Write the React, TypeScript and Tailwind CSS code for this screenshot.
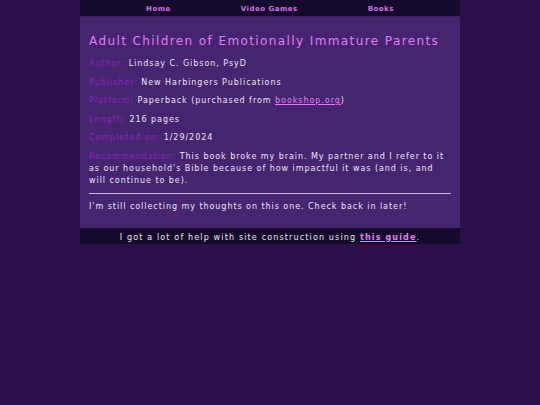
import React from "react";

const font = { fontFamily: '"DejaVu Sans", "Liberation Sans", sans-serif' };

function Row({ label, children }: { label: string; children: React.ReactNode }) {
  return (
    <p className="mb-[6.5px] leading-[12px]">
      <span className="text-[#8e22b8]">{label}</span> <span className="text-[#ece4f4]">{children}</span>
    </p>
  );
}

export default function App() {
  return (
    <div className="min-h-[405px] w-full bg-[#2b0f49]" style={font}>
      <div className="mx-auto w-[380px]">
        <nav className="h-[17px] pt-[3px] bg-[#150a2c] flex justify-center items-center gap-[70px] text-[7px] tracking-[0.5px] font-bold text-[#d26fe6] border-b border-[#3a1d62]">
          <span>Home</span>
          <span>Video Games</span>
          <span>Books</span>
        </nav>
        <main className="bg-[#45256f] px-[9px] pt-[16px] pb-[15px]">
          <h1 className="text-[12px] tracking-[1.4px] text-[#e577f5] leading-[16px] mb-[9px]">
            Adult Children of Emotionally Immature Parents
          </h1>
          <div className="text-[8px] tracking-[0.95px]">
            <Row label="Author:">Lindsay C. Gibson, PsyD</Row>
            <Row label="Publisher:">New Harbingers Publications</Row>
            <Row label="Platform:">
              Paperback (purchased from <a className="text-[#e67ff5] underline">bookshop.org</a>)
            </Row>
            <Row label="Length:">216 pages</Row>
            <Row label="Completed on:">1/29/2024</Row>
            <Row label="Recommendation:">
              This book broke my brain. My partner and I refer to it as our household's Bible because of how impactful it was (and is, and will continue to be).
            </Row>
            <hr className="border-0 h-px bg-[#c7b6dd] mt-[1px] mb-[7px]" />
            <p className="text-[#ece4f4] leading-[12px]">I'm still collecting my thoughts on this one. Check back in later!</p>
          </div>
        </main>
        <footer className="h-[16px] pt-[3px] bg-[#150a2c] flex items-center justify-center text-[8px] tracking-[1.15px] text-[#ece4f4]">
          <span>
            I got a lot of help with site construction using <a className="text-[#e67ff5] underline font-bold">this guide</a>.
          </span>
        </footer>
      </div>
    </div>
  );
}
